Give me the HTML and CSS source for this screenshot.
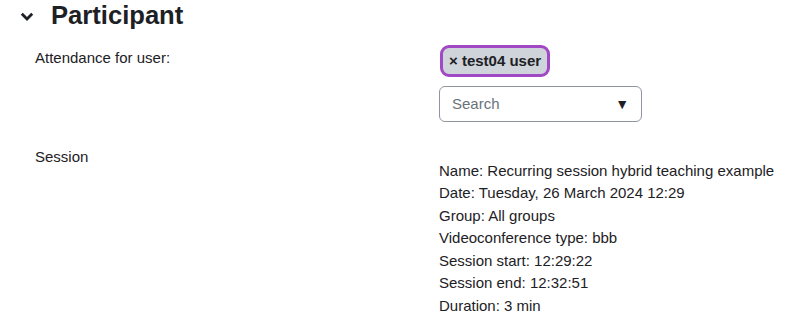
FILE: index.html
```html
<!DOCTYPE html>
<html>

<head>
  <title>Participant</title>
  <link rel="stylesheet" href="styles.css">
</head>

<body>
  <div class="section">
    <h3 class="section-title">
      <span class="chevron">
        <svg width="14" height="9" viewBox="0 0 14 9"><path d="M1.8 1.8 L7 7 L12.2 1.8" fill="none" stroke="#1d2125" stroke-width="2.8"/></svg>
      </span>
      Participant
    </h3>

    <div class="form-row">
      <div class="form-label">Attendance for user:</div>
      <div class="form-field">
        <span class="badge">× test04 user</span>
        <div class="search-box">
          <span class="placeholder">Search</span>
          <span class="arrow">▼</span>
        </div>
      </div>
    </div>

    <div class="form-row session-row">
      <div class="form-label">Session</div>
      <div class="form-field">
        <div class="session-info">
          Name: Recurring session hybrid teaching example<br>
          Date: Tuesday, 26 March 2024 12:29<br>
          Group: All groups<br>
          Videoconference type: bbb<br>
          Session start: 12:29:22<br>
          Session end: 12:32:51<br>
          Duration: 3 min
        </div>
      </div>
    </div>
  </div>
</body>

</html>
```

FILE: styles.css
```css
* {
  box-sizing: border-box;
}

body {
  margin: 0;
  background: #fff;
  color: #1d2125;
  font-family: "Liberation Sans", Arial, sans-serif;
  font-size: 15px;
  line-height: 22.5px;
}

.section {
  padding-left: 20px;
}

.section-title {
  display: flex;
  align-items: center;
  margin: 0;
  height: 31.5px;
  line-height: 31.5px;
  font-size: 25.6px;
  font-weight: bold;
}

.chevron {
  display: flex;
  width: 31px;
  padding-top: 1px;
}

.form-row {
  display: flex;
  margin-top: 13.5px;
}

.form-label {
  width: 419px;
  padding-left: 15px;
  padding-top: 1.5px;
}

.form-field {
  flex: 1;
}

.badge {
  display: inline-block;
  margin-left: 1px;
  padding: 0 6px;
  height: 32px;
  line-height: 26px;
  background: #ced4da;
  border: 3px solid #a148c4;
  border-radius: 9px;
  font-weight: bold;
  color: #1d2125;
}

.search-box {
  display: flex;
  justify-content: space-between;
  align-items: center;
  width: 203px;
  height: 36px;
  margin-top: 9px;
  padding: 0 12px 0 12px;
  border: 1px solid #8f959e;
  border-radius: 6px;
}

.placeholder {
  color: #6a737b;
}

.arrow {
  font-size: 14px;
  padding-top: 1px;
}

.session-row {
  margin-top: 22.5px;
}

.session-info {
  padding-top: 15px;
}
```
